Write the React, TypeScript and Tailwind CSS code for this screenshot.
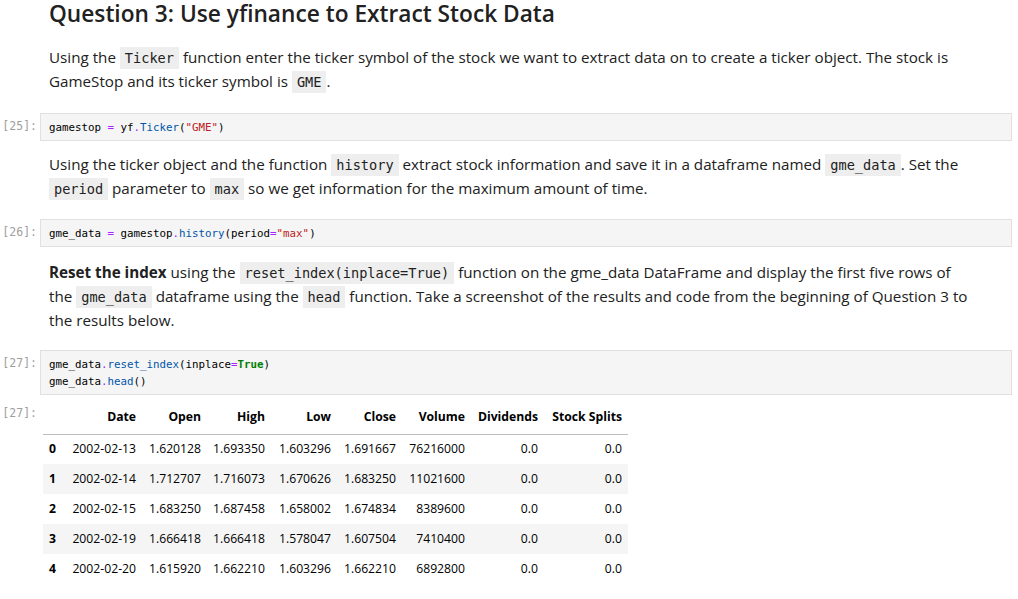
import React from "react";

const C = ({ children }: { children: React.ReactNode }) => (
  <code className="bg-[#eeeeee] px-[5px] py-[3px] font-['DejaVu_Sans_Mono',monospace] text-[13.6px] leading-[15px] text-[#212121]">
    {children}
  </code>
);

const Prompt = ({ n, pt = "pt-[5px]" }: { n: number; pt?: string }) => (
  <div className={`w-[40px] shrink-0 text-right pr-[3px] font-['DejaVu_Sans_Mono',monospace] text-[11.5px] leading-[17px] text-[#9e9e9e] ${pt}`}>
    [{n}]:
  </div>
);

const Op = ({ children }: { children: React.ReactNode }) => <span className="text-[#aa22ff]">{children}</span>;
const P = ({ children }: { children: React.ReactNode }) => <span className="text-[#0055aa]">{children}</span>;
const S = ({ children }: { children: React.ReactNode }) => <span className="text-[#ba2121]">{children}</span>;
const K = ({ children }: { children: React.ReactNode }) => <span className="text-[#008000] font-bold">{children}</span>;

const CodeBox = ({ children }: { children: React.ReactNode }) => (
  <div className="w-[972px] border border-[#e0e0e0] bg-[#f5f5f5] pl-[8px] pt-[5px] pb-[4px] font-['DejaVu_Sans_Mono',monospace] text-[10.8px] leading-[17px] text-black whitespace-pre">
    {children}
  </div>
);

const rows = [
  ["0", "2002-02-13", "1.620128", "1.693350", "1.603296", "1.691667", "76216000", "0.0", "0.0"],
  ["1", "2002-02-14", "1.712707", "1.716073", "1.670626", "1.683250", "11021600", "0.0", "0.0"],
  ["2", "2002-02-15", "1.683250", "1.687458", "1.658002", "1.674834", "8389600", "0.0", "0.0"],
  ["3", "2002-02-19", "1.666418", "1.666418", "1.578047", "1.607504", "7410400", "0.0", "0.0"],
  ["4", "2002-02-20", "1.615920", "1.662210", "1.603296", "1.662210", "6892800", "0.0", "0.0"],
];
const headers = ["", "Date", "Open", "High", "Low", "Close", "Volume", "Dividends", "Stock Splits"];
const widths = ["w-[20px]", "w-[79px]", "w-[65px]", "w-[64px]", "w-[66px]", "w-[65px]", "w-[69px]", "w-[73px]", "w-[84px]"];

export default function App() {
  return (
    <div className="w-[1018px] h-[599px] overflow-hidden bg-white font-['Open_Sans',sans-serif] text-[#212121]">
      <div className="pl-[49px]">
        <h1 className="pt-[1px] h-[27px] text-[22.7px] leading-[26px] font-semibold whitespace-nowrap">
          Question 3: Use yfinance to Extract Stock Data
        </h1>
        <p className="mt-[18px] text-[15.2px] leading-[24px] whitespace-nowrap">
          Using the <C>Ticker</C> function enter the ticker symbol of the stock we want to extract data on to create a ticker object. The stock is
          <br />
          GameStop and its ticker symbol is <C>GME</C>.
        </p>
      </div>

      <div className="mt-[20px] flex">
        <Prompt n={25} />
        <CodeBox>
          gamestop <Op>=</Op> yf<Op>.</Op><P>Ticker</P>(<S>"GME"</S>)
        </CodeBox>
      </div>

      <div className="pl-[49px] mt-[11px]">
        <p className="text-[15.2px] leading-[24px] whitespace-nowrap">
          Using the ticker object and the function <C>history</C> extract stock information and save it in a dataframe named <C>gme_data</C>. Set the
          <br />
          <C>period</C> parameter to <C>max</C> so we get information for the maximum amount of time.
        </p>
      </div>

      <div className="mt-[19px] flex">
        <Prompt n={26} />
        <CodeBox>
          gme_data <Op>=</Op> gamestop<Op>.</Op><P>history</P>(period<Op>=</Op><S>"max"</S>)
        </CodeBox>
      </div>

      <div className="pl-[49px] mt-[13px]">
        <p className="text-[15.2px] leading-[24px] whitespace-nowrap">
          <b className="font-bold">Reset the index</b> using the <C>reset_index(inplace=True)</C> function on the gme_data DataFrame and display the first five rows of
          <br />
          the <C>gme_data</C> dataframe using the <C>head</C> function. Take a screenshot of the results and code from the beginning of Question 3 to
          <br />
          the results below.
        </p>
      </div>

      <div className="mt-[18px] flex">
        <Prompt n={27} />
        <CodeBox>
          gme_data<Op>.</Op><P>reset_index</P>(inplace<Op>=</Op><K>True</K>)
          {"\n"}
          gme_data<Op>.</Op><P>head</P>()
        </CodeBox>
      </div>

      <div className="mt-[10px] flex">
        <Prompt n={27} pt="pt-[0px]" />
        <div className="pl-[3px]">
          <table className="table-fixed border-collapse font-['Open_Sans',sans-serif] text-[12.2px] text-black">
            <thead>
              <tr className="h-[29px] border-b border-[#bdbdbd]">
                {headers.map((h, i) => (
                  <th key={i} className={`${widths[i]} px-[6px] pb-[5px] text-right font-bold whitespace-nowrap align-middle`}>
                    {h}
                  </th>
                ))}
              </tr>
            </thead>
            <tbody>
              {rows.map((r, ri) => (
                <tr key={ri} className={`h-[30px] ${ri % 2 === 1 ? "bg-[#f5f5f5]" : "bg-white"}`}>
                  {r.map((c, ci) => (
                    <td
                      key={ci}
                      className={`px-[6px] whitespace-nowrap align-middle ${ci === 0 ? "text-left font-bold" : "text-right"}`}
                    >
                      {c}
                    </td>
                  ))}
                </tr>
              ))}
            </tbody>
          </table>
        </div>
      </div>
    </div>
  );
}
